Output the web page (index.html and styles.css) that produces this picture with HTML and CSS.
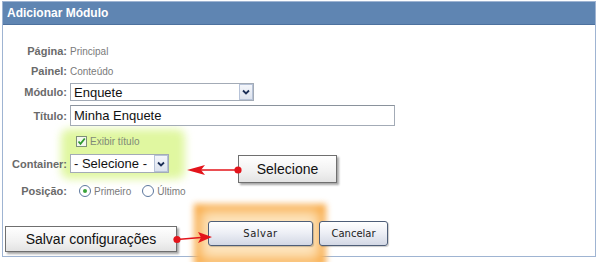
FILE: index.html
```html
<!DOCTYPE html>
<html lang="pt">
<head>
    <meta charset="UTF-8">
    <title>Adicionar Módulo</title>
    <link rel="stylesheet" href="styles.css">
</head>
<body>
    <div class="panel">
        <div class="panel-header">Adicionar Módulo</div>

        <div class="glow glow-green"></div>
        <div class="glow glow-orange"></div>

        <div class="panel-body">
            <div class="row row-info">
                <span class="label">Página:</span>
                <span class="value">Principal</span>
            </div>
            <div class="row row-info">
                <span class="label">Painel:</span>
                <span class="value">Conteúdo</span>
            </div>
            <div class="row row-modulo">
                <span class="label">Módulo:</span>
                <div class="combo combo-wide">
                    <span class="combo-text">Enquete</span>
                    <span class="combo-btn">
                        <svg width="8" height="6" viewBox="0 0 8 6"><path d="M1 1.5 L4 4.5 L7 1.5" fill="none" stroke="#1c2f57" stroke-width="1.8"/></svg>
                    </span>
                </div>
            </div>
            <div class="row row-titulo">
                <span class="label">Título:</span>
                <div class="text-input">Minha Enquete</div>
            </div>
            <div class="row row-check">
                <span class="label"></span>
                <span class="checkbox">
                    <svg width="9" height="9" viewBox="0 0 9 9"><path d="M1.5 4.5 L3.5 6.8 L7.8 1.5" fill="none" stroke="#2f9a2f" stroke-width="1.8"/></svg>
                </span>
                <span class="check-text">Exibir título</span>
            </div>
            <div class="row row-container">
                <span class="label">Container:</span>
                <div class="combo combo-small">
                    <span class="combo-text">- Selecione -</span>
                    <span class="combo-btn">
                        <svg width="8" height="6" viewBox="0 0 8 6"><path d="M1 1.5 L4 4.5 L7 1.5" fill="none" stroke="#1c2f57" stroke-width="1.8"/></svg>
                    </span>
                </div>
            </div>
            <div class="row row-posicao">
                <span class="label">Posição:</span>
                <span class="radio checked"></span>
                <span class="radio-text">Primeiro</span>
                <span class="radio"></span>
                <span class="radio-text">Último</span>
            </div>
            <div class="actions">
                <button class="btn btn-salvar">Salvar</button>
                <button class="btn btn-cancelar">Cancelar</button>
            </div>
        </div>

        <div class="callout callout-selecione">Selecione</div>
        <div class="callout callout-salvar">Salvar configurações</div>
    </div>

    <svg class="arrows" width="600" height="262" viewBox="0 0 600 262">
        <line x1="238" y1="170" x2="201" y2="170" stroke="#e3141b" stroke-width="1.5"/>
        <polygon points="187,170 205,165 201,170 205,175" fill="#e3141b"/>
        <circle cx="238" cy="170" r="3.6" fill="#e3141b"/>

        <line x1="177" y1="239.5" x2="201" y2="237.5" stroke="#e3141b" stroke-width="1.5"/>
        <polygon points="212,237 198,232 201,237.5 198,243" fill="#e3141b"/>
        <circle cx="177" cy="239.5" r="3.6" fill="#e3141b"/>
    </svg>
</body>
</html>
```

FILE: styles.css
```css
body {
    margin: 0;
    background: #fff;
    font-family: "Liberation Sans", Arial, sans-serif;
    width: 600px;
    height: 262px;
    overflow: hidden;
    position: relative;
}

.panel {
    position: relative;
    box-sizing: border-box;
    margin: 1px 0 0 2px;
    width: 594px;
    height: 256px;
    border: 1px solid #9fb4d2;
}

.panel-header {
    position: relative;
    z-index: 2;
    height: 22px;
    line-height: 22px;
    padding-left: 4px;
    background: #5f85b2;
    border-bottom: 1px solid #4d719e;
    color: #fff;
    font-size: 12px;
    font-weight: bold;
}

.panel-body {
    position: relative;
    z-index: 1;
    padding-top: 16px;
}

.row {
    display: flex;
    align-items: center;
}

.label {
    width: 64px;
    flex: none;
    text-align: right;
    margin-right: 3px;
    color: #6a6a6a;
    font-size: 11px;
    font-weight: bold;
}

.value {
    color: #7a7a7a;
    font-size: 10px;
}

.row-info { height: 20px; }
.row-modulo { height: 22px; }
.row-titulo { height: 25px; }
.row-check { height: 26px; }
.row-container { height: 19px; }
.row-posicao { height: 36px; }

.combo {
    box-sizing: border-box;
    display: flex;
    align-items: center;
    background: #fff;
    border: 1px solid #a3abb6;
    font-size: 13px;
    color: #111;
}

.combo-wide {
    width: 184px;
    height: 18px;
}

.combo-small {
    width: 99px;
    height: 19px;
}

.combo-text {
    flex: 1;
    padding-left: 3px;
    white-space: nowrap;
}

.combo-btn {
    box-sizing: border-box;
    width: 14px;
    height: 100%;
    display: flex;
    align-items: center;
    justify-content: center;
    background: linear-gradient(#f4f6fb, #dde3ee);
    border: 1px solid #b7c3d8;
}

.text-input {
    box-sizing: border-box;
    width: 325px;
    height: 21px;
    line-height: 19px;
    padding-left: 3px;
    border: 1px solid #a3abb6;
    border-top-color: #8a929c;
    background: #fff;
    font-size: 13px;
    color: #111;
}

.checkbox {
    box-sizing: border-box;
    width: 11px;
    height: 11px;
    margin-left: 6px;
    display: flex;
    align-items: center;
    justify-content: center;
    border: 1px solid #7d8f78;
    background: #f4f8ee;
}

.check-text {
    margin-left: 3px;
    color: #7f8a78;
    font-size: 10px;
}

.radio {
    box-sizing: border-box;
    width: 12px;
    height: 12px;
    margin-left: 9px;
    border: 1px solid #5d789e;
    border-radius: 50%;
    background: #fff;
    display: flex;
    align-items: center;
    justify-content: center;
}

.radio.checked::after {
    content: "";
    width: 4px;
    height: 4px;
    border-radius: 50%;
    background: #3aa33a;
}

.radio-text {
    margin-left: 3px;
    color: #7a7a7a;
    font-size: 10px;
}

.radio-text + .radio {
    margin-left: 11px;
}

.actions {
    display: flex;
    gap: 6px;
    margin-top: 12px;
    padding-left: 205px;
}

.btn {
    box-sizing: border-box;
    height: 25px;
    border: 1px solid #4e5e78;
    border-radius: 3px;
    background: linear-gradient(#ffffff, #eef0f6 45%, #d3d8e5);
    box-shadow: 1px 1px 1px rgba(0,0,0,0.2);
    font-family: "DejaVu Sans", Verdana, sans-serif;
    font-size: 10px;
    color: #222;
    padding: 0;
}

.btn-salvar {
    width: 105px;
    letter-spacing: 0.5px;
}

.btn-cancelar {
    width: 69px;
}

.glow {
    position: absolute;
    z-index: 0;
}

.glow-green {
    left: 58px;
    top: 127px;
    width: 124px;
    height: 50px;
    background: #e0f7a0;
    border-radius: 8px;
    filter: blur(4px);
}

.glow-orange {
    left: 191px;
    top: 202px;
    width: 132px;
    height: 62px;
    background: #fde5bf;
    box-shadow: inset 0 0 12px 6px #f8a43a;
    filter: blur(3px);
}

.callout {
    position: absolute;
    z-index: 3;
    box-sizing: border-box;
    display: flex;
    align-items: center;
    justify-content: center;
    border: 1px solid #6f6f6f;
    background: linear-gradient(#ffffff, #f1f1f1 60%, #e3e3e3);
    box-shadow: 2px 2px 2px rgba(0,0,0,0.35);
    font-family: "Liberation Sans", Arial, sans-serif;
    font-size: 14px;
    color: #111;
}

.callout-selecione {
    left: 235px;
    top: 153px;
    width: 99px;
    height: 28px;
}

.callout-salvar {
    left: 2px;
    top: 224px;
    width: 172px;
    height: 26px;
}

.arrows {
    position: absolute;
    left: 0;
    top: 0;
    z-index: 5;
    pointer-events: none;
}
```
